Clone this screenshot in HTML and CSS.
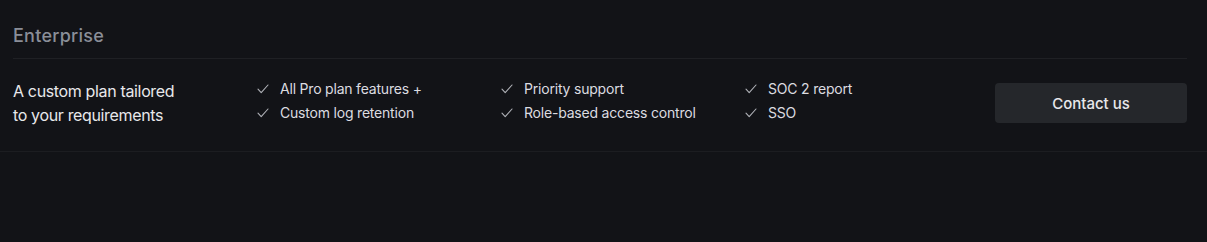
FILE: index.html
```html
<!DOCTYPE html>
<html lang="en">
<head>
<meta charset="utf-8">
<title>Enterprise</title>
<link rel="stylesheet" href="styles.css">
</head>
<body>
<section class="plan">
  <header class="plan-head">
    <h2 class="plan-title">Enterprise</h2>
  </header>
  <div class="plan-row">
    <p class="plan-desc">A custom plan tailored<br>to your requirements</p>
    <ul class="features">
      <li><svg class="check" viewBox="0 0 12 10"><path d="M1 5.2 L4.2 8.6 L11 1"/></svg>All Pro plan features +</li>
      <li><svg class="check" viewBox="0 0 12 10"><path d="M1 5.2 L4.2 8.6 L11 1"/></svg>Custom log retention</li>
    </ul>
    <ul class="features">
      <li><svg class="check" viewBox="0 0 12 10"><path d="M1 5.2 L4.2 8.6 L11 1"/></svg>Priority support</li>
      <li><svg class="check" viewBox="0 0 12 10"><path d="M1 5.2 L4.2 8.6 L11 1"/></svg>Role-based access control</li>
    </ul>
    <ul class="features">
      <li><svg class="check" viewBox="0 0 12 10"><path d="M1 5.2 L4.2 8.6 L11 1"/></svg>SOC 2 report</li>
      <li><svg class="check" viewBox="0 0 12 10"><path d="M1 5.2 L4.2 8.6 L11 1"/></svg>SSO</li>
    </ul>
    <div class="cta-wrap">
      <button class="cta" type="button">Contact us</button>
    </div>
  </div>
</section>
</body>
</html>
```

FILE: styles.css
```css
html, body {
  margin: 0;
  padding: 0;
  background: #121317;
  height: 100%;
}
body {
  font-family: Inter, "Noto Sans", "Liberation Sans", sans-serif;
  color: #e6e6e9;
  -webkit-font-smoothing: antialiased;
}
.plan {
  padding-top: 22px;
}
.plan-head {
  margin: 0 20px 0 13px;
  padding-bottom: 8px;
  border-bottom: 1px solid #1f2024;
}
.plan-title {
  margin: 0;
  font-size: 18px;
  line-height: 28px;
  font-weight: 500;
  letter-spacing: 0.25px;
  color: #8a8e98;
}
.plan-row {
  display: grid;
  grid-template-columns: 244px 244px 244px 244px 1fr;
  align-items: start;
  padding: 18px 20px 24px 13px;
  border-bottom: 1px solid #1c1d21;
}
.plan-desc {
  margin: 2px 0 0;
  font-size: 16px;
  line-height: 24px;
  letter-spacing: -0.35px;
  color: #e8e8eb;
}
.features {
  list-style: none;
  margin: 0;
  padding: 0;
  font-size: 14px;
  line-height: 24px;
  letter-spacing: -0.2px;
  color: #dcdce0;
}
.features li {
  display: flex;
  align-items: center;
}
.check {
  width: 12px;
  height: 10px;
  margin-right: 11px;
  fill: none;
  stroke: #b0b2b8;
  stroke-width: 1.1;
  stroke-linecap: round;
  stroke-linejoin: round;
}
.cta-wrap {
  display: flex;
  justify-content: flex-end;
  padding-top: 6px;
}
.cta {
  width: 192px;
  height: 40px;
  border: 0;
  border-radius: 4px;
  background: #25272b;
  color: #e8e8eb;
  font-family: inherit;
  font-size: 15px;
  font-weight: 500;
  cursor: pointer;
}
```
